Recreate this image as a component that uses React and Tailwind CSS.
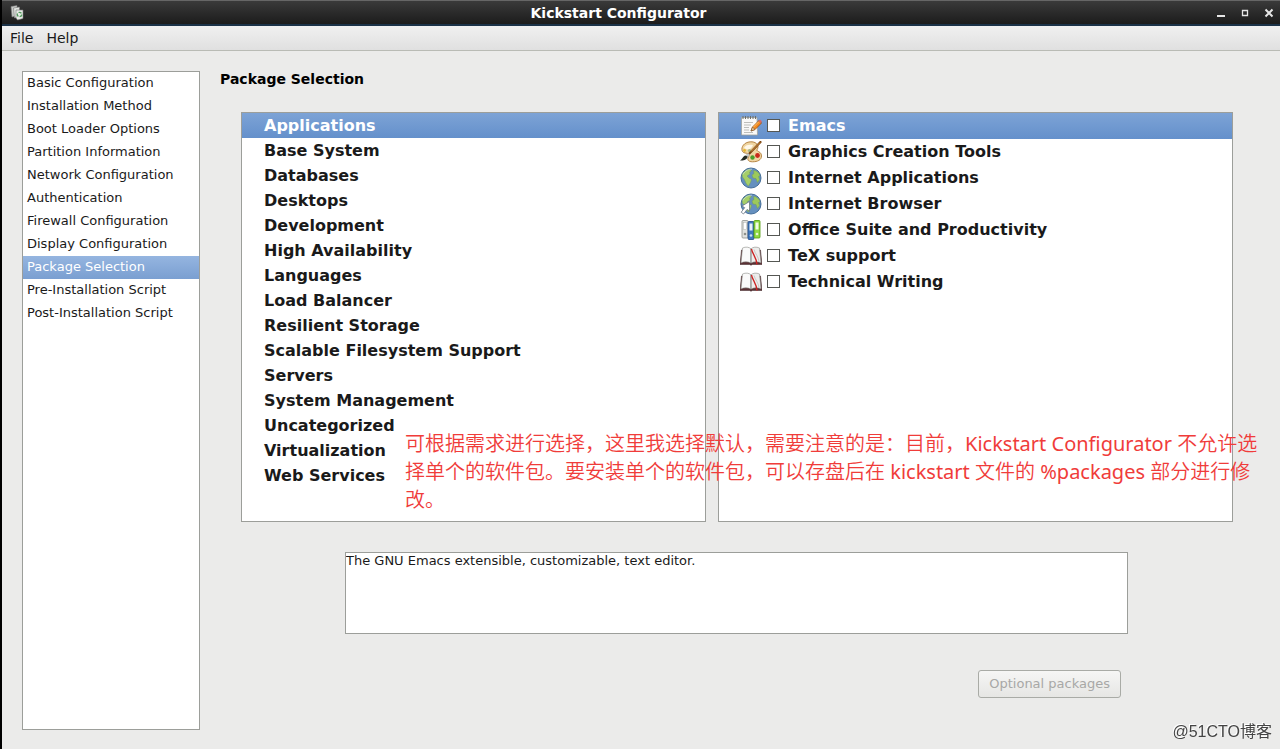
import { useState } from 'react';

const sections = [
    'Basic Configuration',
    'Installation Method',
    'Boot Loader Options',
    'Partition Information',
    'Network Configuration',
    'Authentication',
    'Firewall Configuration',
    'Display Configuration',
    'Package Selection',
    'Pre-Installation Script',
    'Post-Installation Script',
];

const categories = [
    'Applications',
    'Base System',
    'Databases',
    'Desktops',
    'Development',
    'High Availability',
    'Languages',
    'Load Balancer',
    'Resilient Storage',
    'Scalable Filesystem Support',
    'Servers',
    'System Management',
    'Uncategorized',
    'Virtualization',
    'Web Services',
];

const AppIcon = () => (
    <svg width="14" height="16" viewBox="0 0 14 16" aria-hidden="true">
        <path d="M1 1.500l6-1v10l-5 1.500z" fill="#c9cbc8" stroke="#777" strokeWidth=".6" />
        <path d="M3.500 3l6-1v10l-5 1z" fill="#e2e4e0" stroke="#777" strokeWidth=".6" />
        <path d="M6 5h7v8.500l-5.500 1.500L6 13z" fill="#e9ebe7" stroke="#777" strokeWidth=".6" />
        <circle cx="9.500" cy="9.500" r="2.200" fill="none" stroke="#4f9a5b" strokeWidth="1.300" strokeDasharray="3 1.200" />
    </svg>
);

const EditorIcon = () => (
    <svg width="22" height="22" viewBox="0 0 22 22" aria-hidden="true">
        <path d="M1.500 2.500h15.500l.5 17.500H1.500z" fill="#f9f9f8" stroke="#a0a29d" strokeWidth=".8" />
        <path d="M3 1v3M5.500 1v3M8 1v3M10.500 1v3M13 1v3M15.500 1v3" stroke="#6c6e6a" strokeWidth="1" />
        <path d="M4 7.500h9M4 10h7M4 12.500h5M4 15h5M4 17.500h9" stroke="#b5b7b3" strokeWidth=".9" />
        <path d="M11 16l1.500-4 6.500-6.500 2.500 2.500-6.500 6.500z" fill="#f58a1f" stroke="#9c4a06" strokeWidth=".8" />
        <path d="M13 12.500l6-6" stroke="#fcc46f" strokeWidth="1" />
        <path d="M11 16l1.500-4 2.500 2.500z" fill="#e8c9a0" stroke="#5f4020" strokeWidth=".5" />
        <path d="M18.500 6l1.500-1.500 2 2-1.500 1.500z" fill="#d66a6a" />
    </svg>
);

const PaletteIcon = () => (
    <svg width="22" height="22" viewBox="0 0 22 22" aria-hidden="true">
        <path d="M8 1.200c6-1.500 10 1.300 10 4.800 0 2-2 3-.5 4s4 1.500 4 5c0 4-4 5.800-9 5.800-4.500 0-5.500-2.300-4-4.800s0-3.500-3.500-4C0 11.200 1 3 8 1.200z" fill="#f0d6a2" stroke="#b07a35" strokeWidth=".9" />
        <path d="M4 7c1-3 5-4 9-3-1 3-3 4.500-6 4.500z" fill="#fff8e8" />
        <circle cx="4.500" cy="9.500" r="1.400" fill="#e6b72f" />
        <circle cx="9.500" cy="9.500" r="1.600" fill="#a6b98a" />
        <circle cx="12.500" cy="16.500" r="2.200" fill="#4a9e2a" />
        <circle cx="17.500" cy="14.500" r="2.400" fill="#c92a1c" />
        <path d="M20.500 1L7 15" stroke="#7b4512" strokeWidth="2.200" strokeLinecap="round" />
        <path d="M20 1.500L11 10.500" stroke="#e0a14f" strokeWidth=".9" />
        <path d="M9 13l-3 3" stroke="#c5c7c3" strokeWidth="2.600" />
        <path d="M7.500 15.500c0 3-4 4.500-7.500 4 2-1 2.500-3.500 5-5z" fill="#252a22" />
    </svg>
);

const Globe = () => (
    <>
        <circle cx="11" cy="11" r="10" fill="#6590bf" stroke="#3a6592" strokeWidth=".9" />
        <path d="M3 6c2-2.500 5-4 7-3.800l1.500 1.800-2 1 .5 2-3 2 2 2 2.500 1.500-1 3-2 3.500C5.500 17 5.500 14 4 12S1.500 9 3 6z" fill="#a5ce68" stroke="#6f9c48" strokeWidth=".4" />
        <path d="M13.500 3.500c3 0 5.500 2 6.500 5l-1.500 1 1 3-2 3-1.500-4-3-.5-1-3 2-1.500z" fill="#9cc95c" stroke="#6f9c48" strokeWidth=".4" />
        <path d="M3 7.500C5 3.500 9 2 12 2.200" stroke="#dce9f5" strokeWidth="1" fill="none" opacity=".6" />
    </>
);

const GlobeIcon = () => (
    <svg width="22" height="22" viewBox="0 0 22 22" aria-hidden="true">
        <Globe />
    </svg>
);

const BrowserIcon = () => (
    <svg width="22" height="22" viewBox="0 0 22 22" aria-hidden="true">
        <Globe />
        <path d="M9.500 8.500v9.500l-2.500-1.500-3.500 4.500-2.300-1.800 3.500-4.500L2 13z" fill="#fff" stroke="#6b7784" strokeWidth=".8" />
    </svg>
);

const OfficeIcon = () => (
    <svg width="22" height="22" viewBox="0 0 22 22" aria-hidden="true">
        <rect x="2" y="1.500" width="6" height="17.500" rx="1" fill="#e0e2df" stroke="#8e918c" strokeWidth=".8" />
        <rect x="8" y="2.500" width="6" height="18" rx="1" fill="#3e78bd" stroke="#204a87" strokeWidth=".8" />
        <rect x="14" y="1.500" width="6" height="17.500" rx="1" fill="#91db46" stroke="#4e9a06" strokeWidth=".8" />
        <rect x="3.500" y="3.500" width="3" height="7" fill="#fff" stroke="#a6a8a4" strokeWidth=".4" />
        <rect x="9.500" y="4.500" width="3" height="7" fill="#e6effa" />
        <rect x="15.500" y="3.500" width="3" height="7" fill="#f1fbe6" />
        <circle cx="5" cy="15" r="1.300" fill="#8d908b" />
        <circle cx="11" cy="16.500" r="1.300" fill="#c9ddf4" />
        <circle cx="17" cy="15" r="1.300" fill="#e8f6d8" />
    </svg>
);

const BookIcon = () => (
    <svg width="22" height="22" viewBox="0 0 22 22" aria-hidden="true">
        <path d="M1.500 5L0 19.500h9.500l1.500.7 1.500-.7H22L20.500 5z" fill="#5a3034" stroke="#3d2023" strokeWidth=".5" />
        <path d="M2.500 3c3.300-1.500 6.500-1 8.500.8V18c-3-1.500-7-1.500-10-.2z" fill="#fafafa" stroke="#8b8d88" strokeWidth=".6" />
        <path d="M19.500 3c-3.300-1.500-6.500-1-8.500.8V18c3-1.500 7-1.500 10-.2z" fill="#ededec" stroke="#8b8d88" strokeWidth=".6" />
        <path d="M11 4v14" stroke="#888" strokeWidth=".8" />
        <path d="M11.500 4c.8 5 5 8 5.500 15.500" stroke="#cc2222" strokeWidth="1.400" fill="none" />
        <path d="M14 4.500c1 4 4.500 7 5 12" stroke="#b9bab7" strokeWidth=".7" fill="none" />
    </svg>
);

const groups = [
    { name: 'Emacs', Icon: EditorIcon },
    { name: 'Graphics Creation Tools', Icon: PaletteIcon },
    { name: 'Internet Applications', Icon: GlobeIcon },
    { name: 'Internet Browser', Icon: BrowserIcon },
    { name: 'Office Suite and Productivity', Icon: OfficeIcon },
    { name: 'TeX support', Icon: BookIcon },
    { name: 'Technical Writing', Icon: BookIcon },
];

const TitleBar = () => (
    <header className="flex h-[26px] items-center justify-between border-t border-b-2 border-t-[#666] border-b-[#1b3248] bg-linear-to-b from-[#3a3a3a] to-[#1c1c1c] pr-[3px] pl-2 text-white">
        <AppIcon />
        <h1 className="flex-1 text-center text-sm leading-5 font-bold">Kickstart Configurator</h1>
        <div className="flex gap-2">
            <button type="button" aria-label="Minimize" className="h-4 w-4">
                <svg width="16" height="16" viewBox="0 0 16 16">
                    <path d="M4 11h8" stroke="#e6e6e6" strokeWidth="2" />
                </svg>
            </button>
            <button type="button" aria-label="Maximize" className="h-4 w-4">
                <svg width="16" height="16" viewBox="0 0 16 16">
                    <path d="M5.500 5.500h5v5h-5z" fill="none" stroke="#e6e6e6" strokeWidth="1.300" />
                </svg>
            </button>
            <button type="button" aria-label="Close" className="h-4 w-4">
                <svg width="16" height="16" viewBox="0 0 16 16">
                    <path d="M4.500 4.500l7 7M11.500 4.500l-7 7" stroke="#e6e6e6" strokeWidth="2" />
                </svg>
            </button>
        </div>
    </header>
);

const MenuBar = () => (
    <nav className="flex h-[25px] items-center gap-[13px] border-b border-[#b9bbb5] bg-linear-to-b from-[#f0f0f0] to-[#e0e0e0] px-2 text-sm leading-5">
        <button type="button">File</button>
        <button type="button">Help</button>
    </nav>
);

export default function App() {
    const [section, setSection] = useState('Package Selection');
    const [category, setCategory] = useState('Applications');
    const [group, setGroup] = useState('Emacs');

    return (
        <div className="flex min-h-screen flex-col border-l-2 border-black bg-[#ebebea] font-['DejaVu_Sans',sans-serif] text-[#1a1a1a]">
            <TitleBar />
            <MenuBar />
            <div className="flex flex-1 gap-5 py-5 pl-5">
                {/* Section list */}
                <nav className="mb-[-1px] w-[178px] shrink-0 border border-[#9c9e9a] bg-white">
                    {sections.map((name) => (
                        <button
                            key={name}
                            type="button"
                            onClick={() => setSection(name)}
                            className={`block h-[23px] w-full px-1 pb-0.5 text-left text-[13px] leading-5 whitespace-nowrap ${
                                section === name ? 'bg-linear-to-b from-[#95b5e0] to-[#7a9fd1] text-white' : ''
                            }`}
                        >
                            {name}
                        </button>
                    ))}
                </nav>

                <main className="flex min-w-0 flex-1 flex-col">
                    <h2 className="mb-[25px] text-sm leading-4 font-bold text-black">Package Selection</h2>

                    <div className="relative mr-[47px] ml-[21px] flex flex-1 gap-3 text-base leading-6 font-bold">
                        <div className="min-w-0 flex-[465] border border-[#9c9e9a] bg-white">
                            {categories.map((name) => (
                                <button
                                    key={name}
                                    type="button"
                                    onClick={() => setCategory(name)}
                                    className={`block h-[25px] w-full pl-[22px] text-left ${
                                        category === name ? 'bg-linear-to-b from-[#7da3d6] to-[#6490cb] text-white' : ''
                                    }`}
                                >
                                    {name}
                                </button>
                            ))}
                        </div>

                        <div className="min-w-0 flex-[515] border border-[#9c9e9a] bg-white">
                            {groups.map(({ name, Icon }) => (
                                <label
                                    key={name}
                                    onClick={() => setGroup(name)}
                                    className={`flex h-[26px] items-center pl-[21px] ${
                                        group === name ? 'bg-linear-to-b from-[#7da3d6] to-[#6490cb] text-white' : ''
                                    }`}
                                >
                                    <Icon />
                                    <input
                                        type="checkbox"
                                        className="mr-2 mb-0.5 ml-[5px] h-[13px] w-[13px] appearance-none border border-[#555753] bg-white checked:bg-[#6490cb]"
                                    />
                                    {name}
                                </label>
                            ))}
                        </div>

                        {/* Note laid over both lists */}
                        <p className="pointer-events-none absolute top-[318px] left-[164px] font-['Noto_Sans','Noto_Sans_CJK_SC_DemiLight','Noto_Sans_CJK_SC',sans-serif] text-xl leading-7 font-normal whitespace-nowrap text-[#f03c3a]">
                            可根据需求进行选择，这里我选择默认，需要注意的是：目前，Kickstart Configurator 不允许选
                            <br />
                            择单个的软件包。要安装单个的软件包，可以存盘后在 kickstart 文件的 %packages 部分进行修
                            <br />
                            改。
                        </p>
                    </div>

                    <textarea
                        readOnly
                        aria-label="Group description"
                        value="The GNU Emacs extensible, customizable, text editor."
                        className="mt-[30px] mr-[152px] ml-[125px] h-[82px] resize-none border border-[#9c9e9a] bg-white text-[13px] leading-4 outline-none"
                    />

                    <button
                        type="button"
                        disabled
                        className="mt-9 mr-[159px] mb-[31px] h-7 self-end rounded-[3px] border border-[#a9aba6] bg-linear-to-b from-[#f6f6f5] to-[#e6e6e4] px-2.5 text-[13px] leading-5 text-[#a8a8a6]"
                    >
                        Optional packages
                    </button>
                </main>
            </div>

            <span className="fixed right-2 bottom-[7px] font-['Liberation_Sans','Noto_Sans_CJK_SC',sans-serif] text-base leading-5 text-[#444] [text-shadow:-1px_-1px_0_#fff]">
                @51CTO博客
            </span>
        </div>
    );
}
